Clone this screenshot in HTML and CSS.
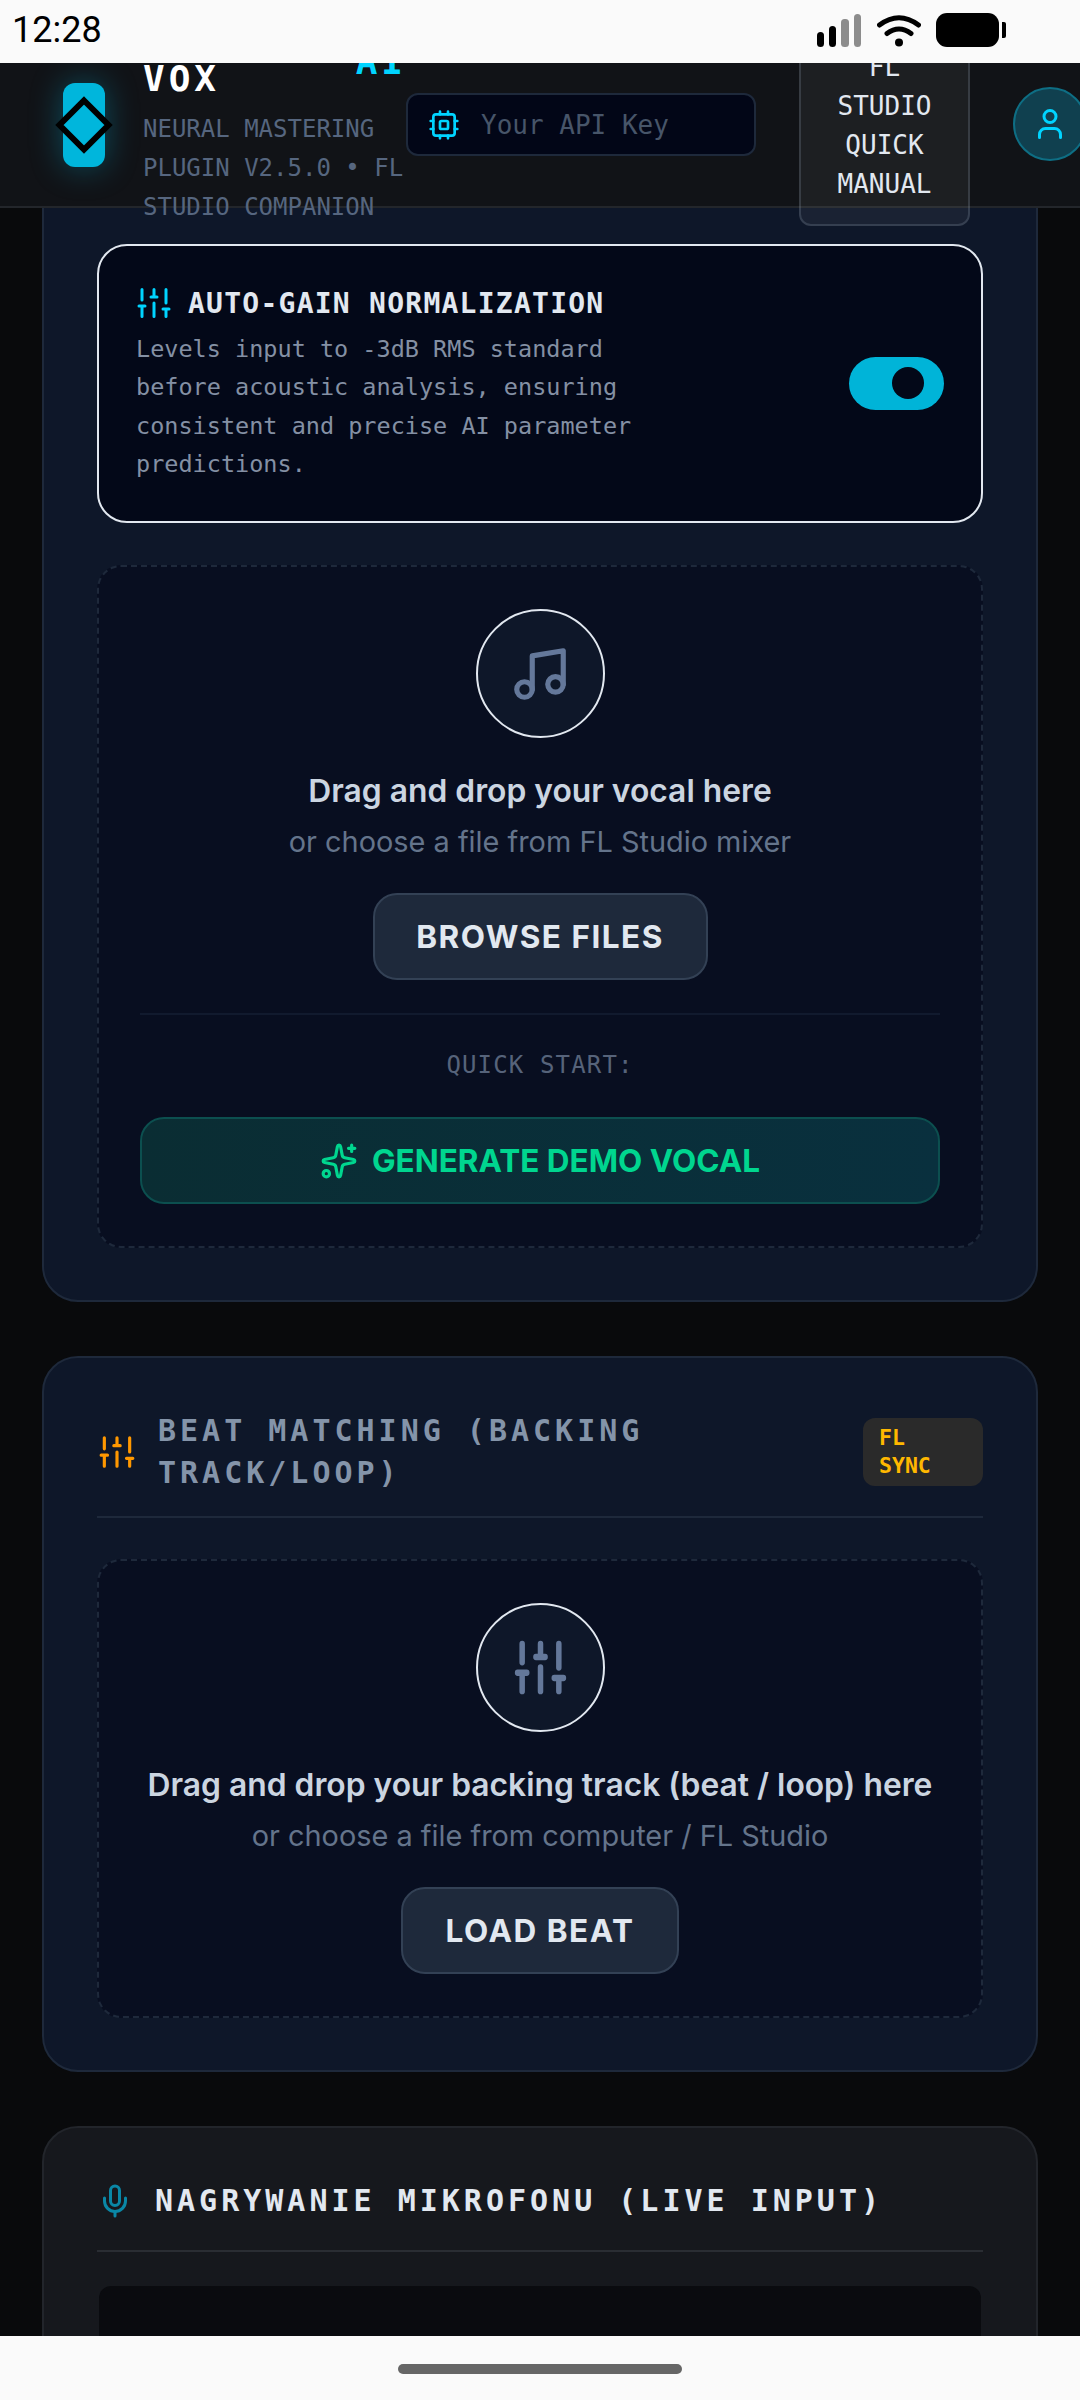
FILE: index.html
```html
<!DOCTYPE html>
<html lang="en">
<head>
  <meta charset="UTF-8" />
  <title>Neural Vox AI</title>
  <meta name="viewport" content="width=device-width, initial-scale=1" />
  <link rel="stylesheet" href="styles.css">
</head>
<body>
  <div class="statusbar">
    <span class="clock">12:28</span>
    <div class="status-icons">
      <svg class="ic-signal" viewBox="0 0 44 33">
        <rect x="0" y="18" width="7" height="15" rx="3.5" fill="#000"/>
        <rect x="12" y="12" width="7" height="21" rx="3.5" fill="#000"/>
        <rect x="24" y="5" width="8" height="28" rx="3.5" fill="#8c8c8c"/>
        <rect x="37" y="0" width="7" height="33" rx="3.5" fill="#8c8c8c"/>
      </svg>
      <svg class="ic-wifi" viewBox="0 0 44 33" fill="none" stroke="#000" stroke-width="5" stroke-linecap="round">
        <path d="M2.5 11 Q22 -3.5 41.5 11"/>
        <path d="M10 19.5 Q22 10.5 34 19.5"/>
        <circle cx="22" cy="28.5" r="4" fill="#000" stroke="none"/>
      </svg>
      <div class="battery"></div>
      <div class="battery-nub"></div>
    </div>
  </div>

  <header class="topbar">
    <div class="logo">
      <svg class="logo-diamond" viewBox="0 0 58 58" fill="none" stroke="#000" stroke-width="6">
        <polygon points="29,4.500 53.500,29 29,53.500 4.500,29"/>
      </svg>
    </div>
    <div class="brand">
      <div class="brand-title"><span>VOX</span><span class="brand-ai">AI</span></div>
      <div class="brand-sub">NEURAL MASTERING PLUGIN V2.5.0 • FL STUDIO COMPANION</div>
    </div>
    <div class="api-key">
      <svg class="ic-chip" viewBox="0 0 24 24" fill="none" stroke="currentColor" stroke-width="2" stroke-linecap="round" stroke-linejoin="round">
        <rect x="4" y="4" width="16" height="16" rx="2"/>
        <rect x="9" y="9" width="6" height="6" rx="1"/>
        <path d="M15 2v2M15 20v2M2 15h2M2 9h2M20 15h2M20 9h2M9 2v2M9 20v2"/>
      </svg>
      <span>Your API Key</span>
    </div>
    <button class="manual">FL STUDIO QUICK MANUAL</button>
    <div class="avatar">
      <svg class="ic-user" viewBox="0 0 24 24" fill="none" stroke="currentColor" stroke-width="2" stroke-linecap="round" stroke-linejoin="round">
        <path d="M19 21v-2a4 4 0 0 0-4-4H9a4 4 0 0 0-4 4v2"/>
        <circle cx="12" cy="7" r="4"/>
      </svg>
    </div>
  </header>

  <main class="content">
    <section class="card card-first">
      <div class="autogain">
        <div class="autogain-text">
          <div class="autogain-title">
            <svg class="ic-sliders-sm" viewBox="0 0 24 24" fill="none" stroke="currentColor" stroke-width="2" stroke-linecap="round">
              <path d="M4 21v-7M4 10V3M12 21v-9M12 8V3M20 21v-5M20 12V3M2 14h4M10 8h4M18 16h4"/>
            </svg>
            <span>AUTO-GAIN NORMALIZATION</span>
          </div>
          <p class="autogain-desc">Levels input to -3dB RMS standard before acoustic analysis, ensuring consistent and precise AI parameter predictions.</p>
        </div>
        <div class="toggle"><div class="toggle-knob"></div></div>
      </div>

      <div class="dropzone">
        <div class="drop-circle">
          <svg class="ic-music" viewBox="0 0 24 24" fill="none" stroke="currentColor" stroke-width="2" stroke-linecap="round" stroke-linejoin="round">
            <path d="M9 18V5l12-2v13"/>
            <circle cx="6" cy="18" r="3"/>
            <circle cx="18" cy="16" r="3"/>
          </svg>
        </div>
        <h3 class="drop-title">Drag and drop your vocal here</h3>
        <p class="drop-sub">or choose a file from FL Studio mixer</p>
        <button class="btn-file btn-browse">BROWSE FILES</button>
        <div class="drop-divider"></div>
        <div class="quick-start">QUICK START:</div>
        <button class="btn-demo">
          <svg class="ic-spark" viewBox="0 0 24 24" fill="none" stroke="currentColor" stroke-width="2" stroke-linecap="round" stroke-linejoin="round">
            <path d="M11.017 2.814a1 1 0 0 1 1.966 0l1.051 5.558a2 2 0 0 0 1.594 1.594l5.558 1.051a1 1 0 0 1 0 1.966l-5.558 1.051a2 2 0 0 0-1.594 1.594l-1.051 5.558a1 1 0 0 1-1.966 0l-1.051-5.558a2 2 0 0 0-1.594-1.594l-5.558-1.051a1 1 0 0 1 0-1.966l5.558-1.051a2 2 0 0 0 1.594-1.594z"/>
            <path d="M20 2v4M22 4h-4"/>
            <circle cx="4" cy="20" r="2"/>
          </svg>
          <span>GENERATE DEMO VOCAL</span>
        </button>
      </div>
    </section>

    <section class="card">
      <div class="card-head">
        <svg class="ic-sliders-md" viewBox="0 0 24 24" fill="none" stroke="currentColor" stroke-width="2" stroke-linecap="round">
          <path d="M4 21v-7M4 10V3M12 21v-9M12 8V3M20 21v-5M20 12V3M2 14h4M10 8h4M18 16h4"/>
        </svg>
        <h2 class="card-title title-muted">BEAT MATCHING (BACKING TRACK/LOOP)</h2>
        <span class="badge">FL SYNC</span>
      </div>
      <div class="dropzone">
        <div class="drop-circle">
          <svg class="ic-sliders-lg" viewBox="0 0 24 24" preserveAspectRatio="none" fill="none" stroke="currentColor" stroke-width="2.4" stroke-linecap="round">
            <path d="M4 21v-7M4 10V3M12 21v-9M12 8V3M20 21v-5M20 12V3M2 14h4M10 8h4M18 16h4"/>
          </svg>
        </div>
        <h3 class="drop-title">Drag and drop your backing track (beat / loop) here</h3>
        <p class="drop-sub">or choose a file from computer / FL Studio</p>
        <button class="btn-file btn-beat">LOAD BEAT</button>
      </div>
    </section>

    <section class="card card-mic">
      <div class="card-head">
        <svg class="ic-mic" viewBox="0 0 24 24" fill="none" stroke="currentColor" stroke-width="2" stroke-linecap="round" stroke-linejoin="round">
          <path d="M12 2a3 3 0 0 0-3 3v7a3 3 0 0 0 6 0V5a3 3 0 0 0-3-3Z"/>
          <path d="M19 10v2a7 7 0 0 1-14 0v-2"/>
          <path d="M12 19v3"/>
        </svg>
        <h2 class="card-title">NAGRYWANIE MIKROFONU (LIVE INPUT)</h2>
      </div>
      <div class="mic-box"></div>
    </section>
  </main>

  <div class="navbar"><div class="home-pill"></div></div>
</body>
</html>
```

FILE: styles.css
```css
:root {
  --mono: "DejaVu Sans Mono", "Liberation Mono", monospace;
  --sans: Inter, "Noto Sans", sans-serif;
  --cyan: #00d4ff;
  --slate-800: #1e293b;
}
* {
  box-sizing: border-box;
}
html, body {
  margin: 0;
  height: 2400px;
}
body {
  display: flex;
  flex-direction: column;
  overflow: hidden;
  background: #090a0c;
  font-family: var(--sans);
}

/* system bars */
.statusbar {
  position: relative;
  z-index: 3;
  flex: none;
  height: 63px;
  display: flex;
  align-items: center;
  justify-content: space-between;
  padding: 0 74px 3px 12px;
  background: #fafafa;
}
.clock {
  font-family: Roboto, sans-serif;
  font-size: 36px;
  color: #000;
}
.status-icons {
  display: flex;
  align-items: center;
}
.ic-signal {
  width: 44px;
  height: 33px;
}
.ic-wifi {
  width: 44px;
  height: 33px;
  margin-left: 16px;
}
.battery {
  width: 63px;
  height: 34px;
  margin-left: 15px;
  background: #000;
  border-radius: 11px;
}
.battery-nub {
  width: 4px;
  height: 16px;
  margin-left: 3px;
  background: #000;
  border-radius: 0 2px 2px 0;
}
.navbar {
  position: relative;
  z-index: 3;
  flex: none;
  height: 64px;
  display: flex;
  justify-content: center;
  padding-top: 28px;
  background: #fafafa;
}
.home-pill {
  width: 284px;
  height: 10px;
  background: #666;
  border-radius: 5px;
}

/* top bar */
.topbar {
  position: relative;
  z-index: 2;
  flex: none;
  height: 145px;
  display: flex;
  align-items: center;
  padding-left: 63px;
  background: #111317;
  border-bottom: 2px solid #23262b;
}
.logo {
  flex: none;
  width: 42px;
  height: 84px;
  margin-bottom: 19px;
  display: flex;
  align-items: center;
  justify-content: center;
  background: #00b6dc;
  border-radius: 12px;
  box-shadow: 0 0 32px rgba(0, 190, 230, 0.35);
}
.logo-diamond {
  flex: none;
  width: 58px;
  height: 58px;
}
.brand {
  flex: none;
  width: 262px;
  margin: 14px 0 0 38px;
}
.brand-title {
  display: flex;
  justify-content: space-between;
  font-family: var(--mono);
  font-size: 36px;
  font-weight: 700;
  line-height: 46px;
  letter-spacing: 4px;
  color: #fff;
}
.brand-ai {
  margin: -17px -2px 0 0;
  color: var(--cyan);
}
.brand-sub {
  margin-top: 8px;
  font-family: var(--mono);
  font-size: 24px;
  line-height: 39px;
  color: #56667f;
}
.api-key {
  flex: none;
  width: 350px;
  height: 63px;
  margin: 0 0 20px 1px;
  display: flex;
  align-items: center;
  gap: 21px;
  padding-left: 20px;
  background: #020617;
  border: 2px solid var(--slate-800);
  border-radius: 12px;
  font-family: var(--mono);
  font-size: 26px;
  color: #475569;
}
.ic-chip {
  width: 32px;
  height: 32px;
  color: var(--cyan);
}
.manual {
  flex: none;
  width: 171px;
  margin-left: 43px;
  padding: 2px 22px 20px;
  background: rgba(255, 255, 255, 0.05);
  border: 2px solid rgba(148, 163, 184, 0.22);
  border-radius: 12px;
  font-family: var(--mono);
  font-size: 26px;
  line-height: 39px;
  text-align: center;
  color: #e2e8f0;
}
.avatar {
  flex: none;
  width: 74px;
  height: 74px;
  margin: 0 0 21px 43px;
  display: flex;
  align-items: center;
  justify-content: center;
  background: #10404f;
  border: 2px solid #0e6e84;
  border-radius: 50%;
}
.ic-user {
  width: 36px;
  height: 36px;
  color: var(--cyan);
}

/* scrolled content */
.content {
  flex: 1;
  min-height: 0;
  display: flex;
  flex-direction: column;
  gap: 54px;
  padding: 0 42px;
}
.card {
  flex: none;
  padding: 52px 53px;
  background: #0e1729;
  border: 2px solid var(--slate-800);
  border-radius: 36px;
}
.card-first {
  margin-top: -60px;
  padding-top: 94px;
}
.card-mic {
  background: #16181d;
  border-color: #22252b;
}

/* auto gain row */
.autogain {
  display: flex;
  align-items: center;
  justify-content: space-between;
  padding: 37px 37px;
  background: #030818;
  border: 2px solid #e2e8f0;
  border-radius: 30px;
}
.autogain-title {
  display: flex;
  align-items: center;
  gap: 16px;
  height: 40px;
  margin-bottom: 7px;
  font-family: var(--mono);
  font-size: 28px;
  font-weight: 700;
  letter-spacing: 1.250px;
  color: #e2e8f0;
}
.ic-sliders-sm {
  flex: none;
  width: 36px;
  height: 36px;
  color: var(--cyan);
}
.autogain-desc {
  width: 520px;
  margin: 0;
  font-family: var(--mono);
  font-size: 23.500px;
  line-height: 38.400px;
  color: #8490a4;
}
.toggle {
  flex: none;
  width: 95px;
  height: 53px;
  display: flex;
  align-items: center;
  justify-content: flex-end;
  padding-right: 20px;
  background: #00b4d8;
  border-radius: 27px;
}
.toggle-knob {
  width: 32px;
  height: 32px;
  background: #030818;
  border-radius: 50%;
}

/* drop zones */
.dropzone {
  display: flex;
  flex-direction: column;
  align-items: center;
  margin-top: 41px;
  padding: 42px 41px;
  background: #080e20;
  border: 2px dashed var(--slate-800);
  border-radius: 24px;
}
.card-first .dropzone {
  margin-top: 42.400px;
}
.drop-circle {
  width: 129px;
  height: 129px;
  display: flex;
  align-items: center;
  justify-content: center;
  margin-bottom: 30px;
  background: #0e1729;
  border: 2px solid #e2e8f0;
  border-radius: 50%;
}
.ic-music {
  width: 62px;
  height: 62px;
  color: #64789a;
}
.ic-sliders-lg {
  width: 55px;
  height: 63px;
  color: #64789a;
}
.drop-title {
  margin: 0 0 8px;
  font-size: 31.800px;
  font-weight: 600;
  line-height: 46px;
  color: #cbd5e1;
  white-space: nowrap;
}
.drop-sub {
  margin: 0 0 31px;
  font-size: 28.900px;
  line-height: 40px;
  color: #64748b;
  white-space: nowrap;
}
.btn-file {
  height: 87px;
  background: var(--slate-800);
  border: 2px solid #334155;
  border-radius: 24px;
  font-family: var(--sans);
  font-size: 31.500px;
  font-weight: 700;
  letter-spacing: 1.500px;
  color: #e2e8f0;
}
.btn-browse {
  width: 335px;
}
.btn-beat {
  width: 278px;
}
.drop-divider {
  align-self: stretch;
  height: 2px;
  margin-top: 33px;
  background: #111a2e;
}
.quick-start {
  margin-top: 32px;
  font-family: var(--mono);
  font-size: 24px;
  line-height: 36px;
  letter-spacing: 1.150px;
  color: #56637a;
}
.btn-demo {
  align-self: stretch;
  height: 87px;
  margin-top: 34px;
  display: flex;
  align-items: center;
  justify-content: center;
  gap: 14px;
  background: linear-gradient(90deg, #0a2d33, #09303e);
  border: 2px solid #0c4f4f;
  border-radius: 24px;
  font-family: var(--sans);
  font-size: 31.500px;
  font-weight: 700;
  color: #00d68f;
}
.ic-spark {
  width: 38px;
  height: 38px;
}

/* card headers */
.card-head {
  display: flex;
  align-items: center;
  gap: 22px;
  padding-bottom: 22px;
  border-bottom: 2px solid var(--slate-800);
}
.ic-sliders-md {
  flex: none;
  width: 38px;
  height: 38px;
  margin-left: 1px;
  color: #ff9800;
}
.ic-mic {
  flex: none;
  width: 36px;
  height: 36px;
  color: #0a87a6;
}
.card-title {
  margin: 0;
  font-family: var(--mono);
  font-size: 30px;
  font-weight: 700;
  line-height: 42px;
  letter-spacing: 4px;
  color: #e2e8f0;
}
.title-muted {
  width: 500px;
  color: #8494a9;
}
.badge {
  flex: none;
  width: 120px;
  margin-left: auto;
  padding: 6px 16px;
  background: #2a2a2a;
  border-radius: 12px;
  font-family: var(--mono);
  font-size: 21.500px;
  font-weight: 700;
  line-height: 28px;
  color: #ffb800;
}
.card-mic .card-head {
  padding-bottom: 28px;
  border-bottom-color: #2a2d33;
}
.mic-box {
  height: 300px;
  margin: 34px 2px 0;
  background: #0a0b0f;
  border-radius: 12px;
}
```
